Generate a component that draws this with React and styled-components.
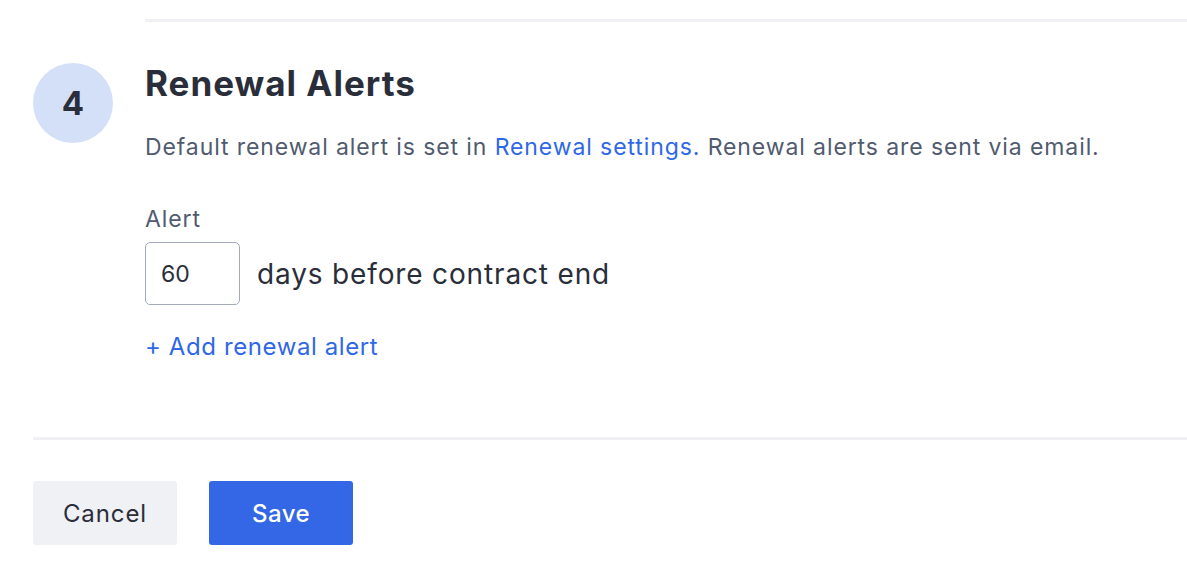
import React from 'react';
import styled, { createGlobalStyle } from 'styled-components';

const GlobalStyle = createGlobalStyle`
  html, body {
    margin: 0;
    padding: 0;
    background: #ffffff;
  }
  body {
    font-family: 'Inter', 'Liberation Sans', sans-serif;
    color: #2a2e3a;
  }
`;

const Page = styled.div`
  padding: 19px 0 0 33px;
  overflow: hidden;
`;

const Divider = styled.div`
  height: 3px;
  background: #f0f0f4;
  margin-left: ${(p) => p.indent || 0}px;
`;

const Section = styled.section`
  display: grid;
  grid-template-columns: 80px 1fr;
  column-gap: 32px;
  padding: 41px 0 75px;
`;

const StepBadge = styled.div`
  width: 80px;
  height: 80px;
  border-radius: 50%;
  background: #d3e0f7;
  display: flex;
  align-items: center;
  justify-content: center;
  font-size: 33px;
  line-height: 1;
  font-weight: 700;
  color: #2a2e3a;
`;

const Content = styled.div`
  display: flex;
  flex-direction: column;
  align-items: flex-start;
`;

const Title = styled.h2`
  margin: 0;
  font-size: 35px;
  line-height: 40px;
  font-weight: 700;
  color: #2a2e3a;
  letter-spacing: 1px;
`;

const Description = styled.p`
  margin: 29px 0 0;
  font-size: 23px;
  line-height: 30px;
  letter-spacing: 0.9px;
  color: #515b70;
`;

const Link = styled.a`
  color: #2f68e6;
  text-decoration: none;
  cursor: pointer;
`;

const FieldLabel = styled.label`
  margin-top: 42px;
  font-size: 23px;
  line-height: 30px;
  letter-spacing: 0.9px;
  color: #515b70;
`;

const AlertRow = styled.div`
  display: flex;
  align-items: center;
  gap: 17px;
  margin-top: 8px;
`;

const DaysInput = styled.input`
  box-sizing: border-box;
  width: 95px;
  height: 63px;
  border: 1.5px solid #a3abbb;
  border-radius: 5px;
  padding: 0 15px;
  font-family: inherit;
  font-size: 23px;
  color: #2a2e3a;
  outline: none;
`;

const RowText = styled.span`
  font-size: 28px;
  letter-spacing: 0.85px;
  color: #2a2e3a;
`;

const AddLink = styled.a`
  margin-top: 27px;
  font-size: 24px;
  line-height: 30px;
  letter-spacing: 0.6px;
  color: #2f68e6;
  cursor: pointer;
`;

const Footer = styled.div`
  display: flex;
  gap: 32px;
  padding-top: 41px;
`;

const Button = styled.button`
  width: 144px;
  height: 64px;
  border: none;
  border-radius: 3px;
  font-family: inherit;
  font-size: 24px;
  cursor: pointer;
  background: ${(p) => (p.primary ? '#3467e5' : '#f0f1f5')};
  color: ${(p) => (p.primary ? '#ffffff' : '#2a2e3a')};
  font-weight: ${(p) => (p.primary ? 500 : 400)};
  letter-spacing: ${(p) => (p.primary ? 0.4 : 0.9)}px;
`;

export default function App() {
  return (
    <>
      <GlobalStyle />
      <Page>
        <Divider indent={112} />
        <Section>
          <StepBadge>4</StepBadge>
          <Content>
            <Title>Renewal Alerts</Title>
            <Description>
              Default renewal alert is set in <Link>Renewal settings.</Link> Renewal alerts are sent via email.
            </Description>
            <FieldLabel>Alert</FieldLabel>
            <AlertRow>
              <DaysInput defaultValue="60" />
              <RowText>days before contract end</RowText>
            </AlertRow>
            <AddLink>+ Add renewal alert</AddLink>
          </Content>
        </Section>
        <Divider />
        <Footer>
          <Button>Cancel</Button>
          <Button primary>Save</Button>
        </Footer>
      </Page>
    </>
  );
}
